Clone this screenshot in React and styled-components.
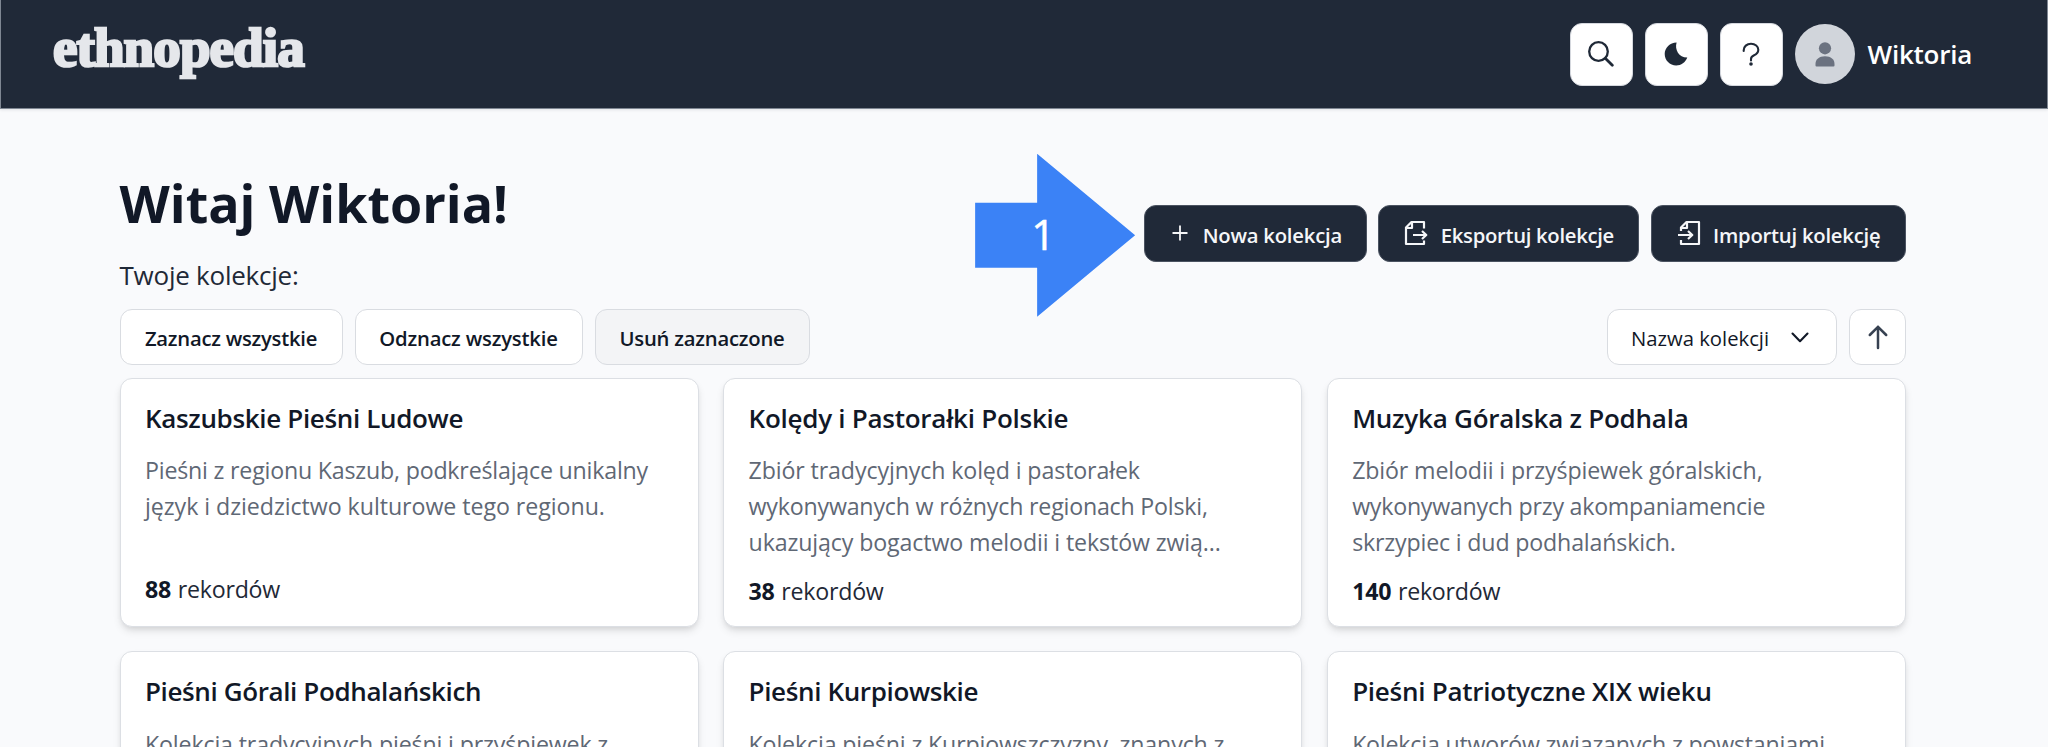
import React from "react";
import styled, { createGlobalStyle } from "styled-components";

const GlobalStyle = createGlobalStyle`
  *, *::before, *::after { box-sizing: border-box; }
  html, body { margin: 0; height: 747px; overflow: hidden; }
  body {
    background: #f9fafc;
    color: #111827;
    font-family: "Open Sans", "Noto Sans", sans-serif;
  }
  h1, h2, p { margin: 0; }
  button { font: inherit; color: inherit; margin: 0; }
  svg { display: block; flex: none; }
`;

const Page = styled.div`
  width: 2048px;
  height: 747px;
  overflow: hidden;
`;

const Header = styled.header`
  display: flex;
  align-items: flex-start;
  justify-content: space-between;
  height: 109px;
  padding: 0 75px 0 52px;
  background: #202938;
  border: 1px solid #7f8793;
  border-top: 0;
  box-shadow: 0 1px 3px rgba(17, 24, 39, 0.1);
`;

const Logo = styled.span`
  margin-top: 14px;
  font-family: "Liberation Serif", serif;
  font-size: 55px;
  font-weight: 700;
  line-height: 68px;
  letter-spacing: -0.9px;
  color: #e5e7eb;
  -webkit-text-stroke: 2.6px #e5e7eb;
`;

const HeaderTools = styled.div`
  display: flex;
  align-items: center;
  gap: 12px;
  margin-top: 22.5px;
`;

const IconButton = styled.button`
  display: flex;
  align-items: center;
  justify-content: center;
  width: 63px;
  height: 63px;
  padding: 0;
  color: #1f2937;
  background: #fff;
  border: 1.5px solid #d5d8de;
  border-radius: 12px;
`;

const Avatar = styled.div`
  display: flex;
  align-items: center;
  justify-content: center;
  width: 60.5px;
  height: 60.5px;
  border-radius: 50%;
  background: #d1d5db;
  color: #6b7280;
`;

const UserName = styled.span`
  padding-left: 0.5px;
  font-size: 26px;
  font-weight: 600;
  line-height: 40px;
  letter-spacing: -0.25px;
  color: #fff;
`;

const Main = styled.main`
  padding: 64px 142px 0 119.5px;
`;

const Hero = styled.section`
  display: flex;
  justify-content: space-between;
  align-items: flex-start;
  height: 136px;
`;

const Title = styled.h1`
  font-size: 52px;
  font-weight: 700;
  line-height: 60px;
`;

const Subtitle = styled.p`
  margin-top: 21.5px;
  font-size: 26px;
  line-height: 40px;
  letter-spacing: -0.24px;
  color: #1f2937;
`;

const Actions = styled.div`
  position: relative;
  display: flex;
  gap: 11.7px;
  margin-top: 31.7px;
`;

const ActionButton = styled.button`
  display: flex;
  align-items: center;
  width: ${(p) => p.$width}px;
  height: 57px;
  padding: 0 0 0 25px;
  gap: ${(p) => p.$gap}px;
  font-size: 20.25px;
  font-weight: 600;
  letter-spacing: ${(p) => p.$tracking}px;
  white-space: nowrap;
  color: #f5f6f8;
  background: #202938;
  border: 1px solid #4b5361;
  border-radius: 12px;
`;

const ActionLabel = styled.span`
  padding-top: 3px;
`;

const Pointer = styled.div`
  position: absolute;
  left: -169px;
  top: -51px;
  width: 160px;
  height: 163px;
  display: flex;
  align-items: center;
  padding: 0 0 3px 56px;
  font-size: 42px;
  line-height: 60px;
  color: #fff;
  background: #3b82f6;
  -webkit-text-stroke: 0.5px #fff;
  clip-path: polygon(0 49px, 62px 49px, 62px 0, 160px 81.5px, 62px 163px, 62px 114px, 0 114px);
`;

const Toolbar = styled.section`
  display: flex;
  justify-content: space-between;
`;

const Group = styled.div`
  display: flex;
  gap: 12px;
`;

const ToolButton = styled.button`
  display: flex;
  align-items: center;
  justify-content: center;
  width: ${(p) => p.$width}px;
  height: 56px;
  padding: 2px 0 0;
  font-size: 20.25px;
  font-weight: 600;
  letter-spacing: ${(p) => p.$tracking || 0}px;
  white-space: nowrap;
  color: #111827;
  background: ${(p) => (p.$muted ? "#f3f4f6" : "#fff")};
  border: 1.5px solid #d9dce1;
  border-radius: 12px;
`;

const SortSelect = styled(ToolButton)`
  justify-content: space-between;
  padding: 1px 27px 0 23px;
  font-weight: 400;
`;

const SortButton = styled(ToolButton)`
  padding-top: 0;
`;

const Cards = styled.section`
  display: grid;
  grid-template-columns: repeat(3, 1fr);
  grid-auto-rows: 249.5px;
  gap: 24.2px;
  margin-top: 12.5px;
`;

const Card = styled.article`
  display: flex;
  flex-direction: column;
  padding: 19px 24.5px;
  background: #fff;
  border: 1.5px solid #dcdfe4;
  border-radius: 12px;
  box-shadow: 0 5px 9px -1px rgba(0, 0, 0, 0.1), 0 3px 6px -3px rgba(0, 0, 0, 0.12);
`;

const CardTitle = styled.h2`
  font-size: 26px;
  font-weight: 600;
  line-height: 40px;
  letter-spacing: ${(p) => p.$tracking}px;
  white-space: nowrap;
`;

const Description = styled.p`
  height: 108px;
  margin: 14.5px 0 12.5px;
  font-size: 23.2px;
  line-height: 36px;
  color: #5f6875;
`;

const Line = styled.span`
  display: block;
  white-space: nowrap;
  letter-spacing: ${(p) => p.$tracking}px;
`;

const Records = styled.p`
  font-size: 23.2px;
  line-height: 36px;
  letter-spacing: -0.25px;
  word-spacing: 1px;
  color: #1f2937;

  strong { color: #111827; }
`;

const SearchIcon = () => (
  <svg width="26" height="26" viewBox="0 0 26 26" fill="none" stroke="currentColor">
    <circle cx="10.5" cy="10.5" r="9.3" strokeWidth="2.3" />
    <path d="M17.5 17.5L24.3 24.3" strokeWidth="2.8" strokeLinecap="round" />
  </svg>
);

const MoonIcon = () => (
  <svg width="24" height="24" viewBox="0 0 24 24" fill="currentColor">
    <path d="M12.6 .5C10.4 7.5 14.9 15.7 23.3 15.6C21.4 20.4 17.2 23.6 12.2 23.6C5.8 23.6 .7 18.4 .7 12.1C.7 5.8 5.9 .6 12.6 .5Z" />
  </svg>
);

const QuestionIcon = () => (
  <svg width="18" height="24" viewBox="0 0 18 24" fill="none" stroke="currentColor" strokeWidth="2.1">
    <path d="M1.7 9V8.3C1.7 4.6 4.8 1.7 9 1.7C13.2 1.7 16.3 4.4 16.3 7.8C16.3 10.3 14.8 12.1 12.1 13.3C9.9 14.3 9 15.3 9 17.1V18.4" strokeLinecap="round" />
    <circle cx="9" cy="22" r="1.8" fill="currentColor" stroke="none" />
  </svg>
);

const PersonIcon = () => (
  <svg width="20" height="25" viewBox="0 0 20 25" fill="currentColor">
    <circle cx="10" cy="6.3" r="6.1" />
    <path d="M.5 22C.5 17.5 4 14.3 10 14.3C16 14.3 19.5 17.5 19.5 22V23.5Q19.5 24.5 18.5 24.5H1.5Q.5 24.5 .5 23.5Z" />
  </svg>
);

const PlusIcon = () => (
  <svg width="20" height="20" viewBox="0 0 20 20" fill="none" stroke="currentColor" strokeWidth="1.8">
    <path d="M10 2.5V17.5M2.5 10H17.5" />
  </svg>
);

const ExportIcon = () => (
  <svg width="24" height="26" viewBox="0 0 24 26" fill="none" stroke="currentColor" strokeWidth="2.2" strokeLinejoin="round">
    <path d="M20 8.5V2H7.5L2 7.5V24H20V20.5" />
    <path d="M8 2V8H2" />
    <path d="M9 15H22M18 11L22.3 15L18 19" />
  </svg>
);

const ImportIcon = () => (
  <svg width="24" height="26" viewBox="0 0 24 26" fill="none" stroke="currentColor" strokeWidth="2.2" strokeLinejoin="round">
    <path d="M4 11V7.5L9.5 2H22V24H4V20" />
    <path d="M10 2V8H4" />
    <path d="M1 15H15M11 11L15.3 15L11 19" />
  </svg>
);

const ChevronIcon = () => (
  <svg width="18" height="12" viewBox="0 0 18 12" fill="none" stroke="currentColor" strokeWidth="2.1" strokeLinecap="round" strokeLinejoin="round">
    <path d="M1.5 1.5L9 9.2L16.5 1.5" />
  </svg>
);

const ArrowUpIcon = () => (
  <svg width="20" height="25" viewBox="0 0 20 25" fill="none" stroke="#374151" strokeWidth="2.5" strokeLinecap="round" strokeLinejoin="round">
    <path d="M10 23V1.8M1.8 10L10 1.8L18.2 10" />
  </svg>
);

const collections = [
  {
    title: "Kaszubskie Pieśni Ludowe", tracking: -0.34, count: 88,
    lines: [["Pieśni z regionu Kaszub, podkreślające unikalny", -0.2], ["język i dziedzictwo kulturowe tego regionu.", -0.05]],
  },
  {
    title: "Kolędy i Pastorałki Polskie", tracking: -0.26, count: 38,
    lines: [["Zbiór tradycyjnych kolęd i pastorałek", -0.12], ["wykonywanych w różnych regionach Polski,", -0.2], ["ukazujący bogactwo melodii i tekstów zwią...", -0.12]],
  },
  {
    title: "Muzyka Góralska z Podhala", tracking: -0.24, count: 140,
    lines: [["Zbiór melodii i przyśpiewek góralskich,", -0.13], ["wykonywanych przy akompaniamencie", -0.24], ["skrzypiec i dud podhalańskich.", -0.17]],
  },
  { title: "Pieśni Górali Podhalańskich", tracking: -0.38, lines: [["Kolekcja tradycyjnych pieśni i przyśpiewek z", -0.15]] },
  { title: "Pieśni Kurpiowskie", tracking: -0.36, lines: [["Kolekcja pieśni z Kurpiowszczyzny, znanych z", -0.15]] },
  { title: "Pieśni Patriotyczne XIX wieku", tracking: -0.25, lines: [["Kolekcja utworów związanych z powstaniami", -0.2]] },
];

function CollectionCard({ title, tracking, lines, count }) {
  return (
    <Card>
      <CardTitle $tracking={tracking}>{title}</CardTitle>
      <Description>
        {lines.map(([text, lineTracking]) => (
          <Line key={text} $tracking={lineTracking}>{text}</Line>
        ))}
      </Description>
      {count && <Records><strong>{count}</strong> rekordów</Records>}
    </Card>
  );
}

export default function App() {
  return (
    <Page>
      <GlobalStyle />
      <Header>
        <Logo>ethnopedia</Logo>
        <HeaderTools>
          <IconButton aria-label="Szukaj"><SearchIcon /></IconButton>
          <IconButton aria-label="Tryb ciemny"><MoonIcon /></IconButton>
          <IconButton aria-label="Pomoc"><QuestionIcon /></IconButton>
          <Avatar><PersonIcon /></Avatar>
          <UserName>Wiktoria</UserName>
        </HeaderTools>
      </Header>
      <Main>
        <Hero>
          <div>
            <Title>Witaj Wiktoria!</Title>
            <Subtitle>Twoje kolekcje:</Subtitle>
          </div>
          <Actions>
            <Pointer>1</Pointer>
            <ActionButton $width={222.5} $gap={12.5} $tracking={-0.21}><PlusIcon /><ActionLabel>Nowa kolekcja</ActionLabel></ActionButton>
            <ActionButton $width={261} $gap={12.5} $tracking={-0.3}><ExportIcon /><ActionLabel>Eksportuj kolekcje</ActionLabel></ActionButton>
            <ActionButton $width={255} $gap={12} $tracking={-0.23}><ImportIcon /><ActionLabel>Importuj kolekcję</ActionLabel></ActionButton>
          </Actions>
        </Hero>
        <Toolbar>
          <Group>
            <ToolButton $width={223} $tracking={-0.25}>Zaznacz wszystkie</ToolButton>
            <ToolButton $width={228} $tracking={-0.18}>Odznacz wszystkie</ToolButton>
            <ToolButton $width={215} $tracking={-0.21} $muted>Usuń zaznaczone</ToolButton>
          </Group>
          <Group>
            <SortSelect $width={230}>Nazwa kolekcji<ChevronIcon /></SortSelect>
            <SortButton $width={57} aria-label="Sortuj rosnąco"><ArrowUpIcon /></SortButton>
          </Group>
        </Toolbar>
        <Cards>
          {collections.map((item) => <CollectionCard key={item.title} {...item} />)}
        </Cards>
      </Main>
    </Page>
  );
}
